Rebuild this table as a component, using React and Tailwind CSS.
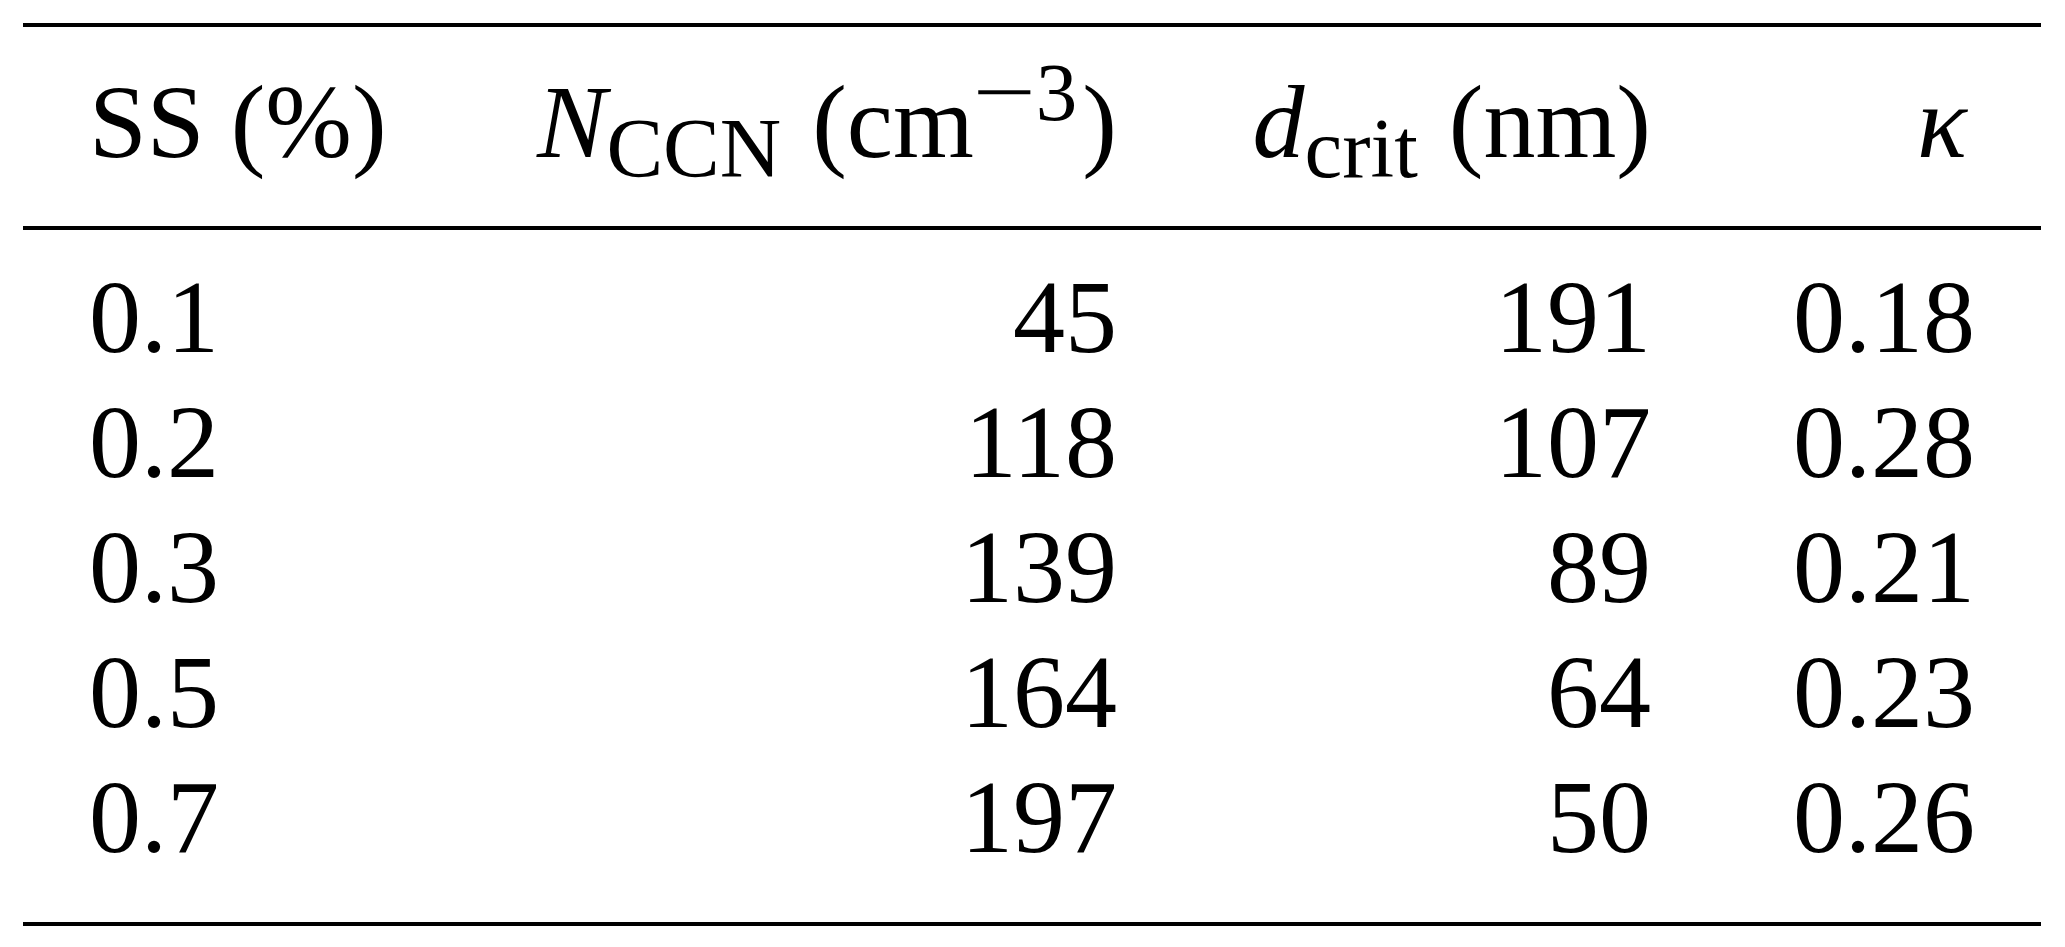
import React from "react";

const rows = [
  ["0.1", "45", "191", "0.18"],
  ["0.2", "118", "107", "0.28"],
  ["0.3", "139", "89", "0.21"],
  ["0.5", "164", "64", "0.23"],
  ["0.7", "197", "50", "0.26"],
];

function Sub({ children }) {
  return (
    <span className="text-[85px] leading-none relative top-[20px] mr-[5px]">{children}</span>
  );
}

export default function App() {
  const grid = "grid grid-cols-[421px_735px_534px_328px]";
  return (
    <div className="w-[2065px] h-[947px] bg-white text-black pt-[23px] pl-[23px] font-['Liberation_Serif','Times_New_Roman',serif]">
      <div className="w-[2018px] text-[104px] leading-[125px]">
        <div className="h-[4px] bg-black" />
        <div className={`${grid} mt-[32px] h-[125px] whitespace-nowrap`}>
          <div className="pl-[66px]">SS (%)</div>
          <div className="text-right pr-[62px]">
            <span className="italic">N</span>
            <Sub>CCN</Sub> (cm
            <span className="text-[83px] leading-none relative top-[-37px] mr-[5px]">
              <span className="inline-block w-[62px] text-center">
                <span className="inline-block scale-x-[1.35]">−</span>
              </span>
              3
            </span>
            )
          </div>
          <div className="text-right pr-[62px]">
            <span className="italic">d</span>
            <Sub>crit</Sub> (nm)
          </div>
          <div className="text-right pr-[74px]">
            <span className="italic">κ</span>
          </div>
        </div>
        <div className="h-[4px] bg-black mt-[42px]" />
        <div className="mt-[24px]">
          {rows.map((r, i) => (
            <div key={i} className={`${grid} h-[125px]`}>
              <div className="pl-[66px]">{r[0]}</div>
              <div className="text-right pr-[62px]">{r[1]}</div>
              <div className="text-right pr-[62px]">{r[2]}</div>
              <div className="text-right pr-[66px]">{r[3]}</div>
            </div>
          ))}
        </div>
        <div className="h-[4px] bg-black mt-[43px]" />
      </div>
    </div>
  );
}
